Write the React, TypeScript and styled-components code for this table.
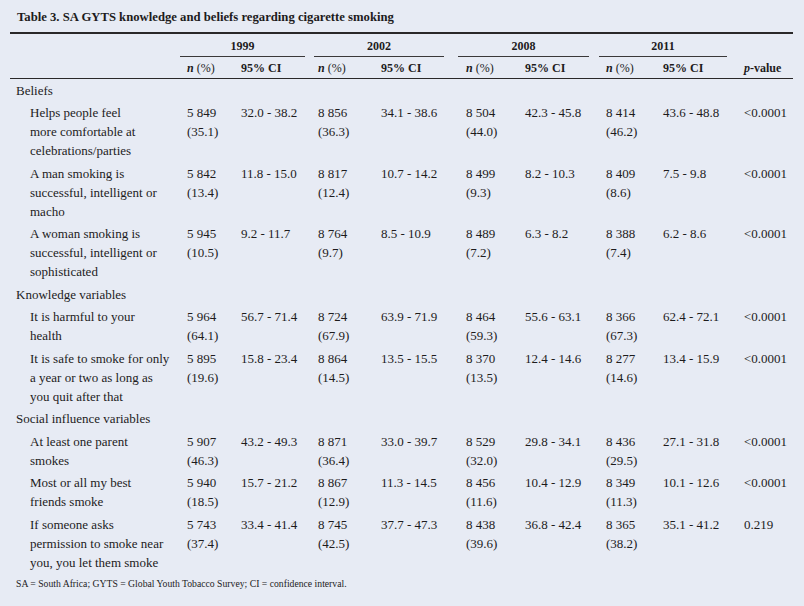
import React from 'react'
import styled, { createGlobalStyle } from 'styled-components'

type Pair = [string, string]
type Entry = {
  label: string[]
  values: [Pair, string][]
  p: string
}
type Group = { title: string; entries: Entry[] }

const years = [
  { year: '1999', l: 0, r: 6 },
  { year: '2002', l: 3, r: 15 },
  { year: '2008', l: -1, r: 10 },
  { year: '2011', l: 0, r: 10 },
]

const groups: Group[] = [
  {
    title: 'Beliefs',
    entries: [
      {
        label: ['Helps people feel', 'more comfortable at', 'celebrations/parties'],
        values: [
          [['5 849', '(35.1)'], '32.0 - 38.2'],
          [['8 856', '(36.3)'], '34.1 - 38.6'],
          [['8 504', '(44.0)'], '42.3 - 45.8'],
          [['8 414', '(46.2)'], '43.6 - 48.8'],
        ],
        p: '<0.0001',
      },
      {
        label: ['A man smoking is', 'successful, intelligent or', 'macho'],
        values: [
          [['5 842', '(13.4)'], '11.8 - 15.0'],
          [['8 817', '(12.4)'], '10.7 - 14.2'],
          [['8 499', '(9.3)'], '8.2 - 10.3'],
          [['8 409', '(8.6)'], '7.5 - 9.8'],
        ],
        p: '<0.0001',
      },
      {
        label: ['A woman smoking is', 'successful, intelligent or', 'sophisticated'],
        values: [
          [['5 945', '(10.5)'], '9.2 - 11.7'],
          [['8 764', '(9.7)'], '8.5 - 10.9'],
          [['8 489', '(7.2)'], '6.3 - 8.2'],
          [['8 388', '(7.4)'], '6.2 - 8.6'],
        ],
        p: '<0.0001',
      },
    ],
  },
  {
    title: 'Knowledge variables',
    entries: [
      {
        label: ['It is harmful to your', 'health'],
        values: [
          [['5 964', '(64.1)'], '56.7 - 71.4'],
          [['8 724', '(67.9)'], '63.9 - 71.9'],
          [['8 464', '(59.3)'], '55.6 - 63.1'],
          [['8 366', '(67.3)'], '62.4 - 72.1'],
        ],
        p: '<0.0001',
      },
      {
        label: ['It is safe to smoke for only', 'a year or two as long as', 'you quit after that'],
        values: [
          [['5 895', '(19.6)'], '15.8 - 23.4'],
          [['8 864', '(14.5)'], '13.5 - 15.5'],
          [['8 370', '(13.5)'], '12.4 - 14.6'],
          [['8 277', '(14.6)'], '13.4 - 15.9'],
        ],
        p: '<0.0001',
      },
    ],
  },
  {
    title: 'Social influence variables',
    entries: [
      {
        label: ['At least one parent', 'smokes'],
        values: [
          [['5 907', '(46.3)'], '43.2 - 49.3'],
          [['8 871', '(36.4)'], '33.0 - 39.7'],
          [['8 529', '(32.0)'], '29.8 - 34.1'],
          [['8 436', '(29.5)'], '27.1 - 31.8'],
        ],
        p: '<0.0001',
      },
      {
        label: ['Most or all my best', 'friends smoke'],
        values: [
          [['5 940', '(18.5)'], '15.7 - 21.2'],
          [['8 867', '(12.9)'], '11.3 - 14.5'],
          [['8 456', '(11.6)'], '10.4 - 12.9'],
          [['8 349', '(11.3)'], '10.1 - 12.6'],
        ],
        p: '<0.0001',
      },
      {
        label: ['If someone asks', 'permission to smoke near', 'you, you let them smoke'],
        values: [
          [['5 743', '(37.4)'], '33.4 - 41.4'],
          [['8 745', '(42.5)'], '37.7 - 47.3'],
          [['8 438', '(39.6)'], '36.8 - 42.4'],
          [['8 365', '(38.2)'], '35.1 - 41.2'],
        ],
        p: '0.219',
      },
    ],
  },
]

// column widths, starting at x=10
const colWidths = [170, 54, 77, 63, 85, 59, 81, 57, 81, 56]

function Lines({ lines }: { lines: string[] }) {
  return (
    <>
      {lines.map((line, i) => (
        <React.Fragment key={i}>
          {i > 0 && <br />}
          {line}
        </React.Fragment>
      ))}
    </>
  )
}

export default function App() {
  return (
    <>
      <GlobalStyle />
      <Page>
        <Title>Table 3. SA GYTS knowledge and beliefs regarding cigarette smoking</Title>
        <Table>
          <colgroup>
            {colWidths.map((w, i) => (
              <col key={i} style={{ width: w }} />
            ))}
          </colgroup>
          <thead>
            <tr>
              <YearHead />
              {years.map((y) => (
                <YearHead key={y.year} colSpan={2}>
                  <YearRule $l={y.l} $r={y.r}>{y.year}</YearRule>
                </YearHead>
              ))}
              <YearHead />
            </tr>
            <tr>
              <SubHead />
              {years.map((y) => (
                <React.Fragment key={y.year}>
                  <SubHead>
                    <em>n</em> <span className="plain">(%)</span>
                  </SubHead>
                  <SubHead>95% CI</SubHead>
                </React.Fragment>
              ))}
              <SubHead>
                <em>p</em>-value
              </SubHead>
            </tr>
          </thead>
          <tbody>
            {groups.map((g) => (
              <React.Fragment key={g.title}>
                <tr>
                  <SectionCell colSpan={10}>{g.title}</SectionCell>
                </tr>
                {g.entries.map((e, i) => (
                  <tr key={i}>
                    <LabelCell>
                      <Lines lines={e.label} />
                    </LabelCell>
                    {e.values.map(([n, ci], j) => (
                      <React.Fragment key={j}>
                        <Cell>
                          <Lines lines={n} />
                        </Cell>
                        <Cell>{ci}</Cell>
                      </React.Fragment>
                    ))}
                    <Cell>{e.p}</Cell>
                  </tr>
                ))}
              </React.Fragment>
            ))}
          </tbody>
        </Table>
        <Note>SA = South Africa; GYTS = Global Youth Tobacco Survey; CI = confidence interval.</Note>
      </Page>
    </>
  )
}

const GlobalStyle = createGlobalStyle`
  html, body {
    margin: 0;
    padding: 0;
    background: #e7ebf4;
  }
  body {
    width: 804px;
    height: 606px;
    overflow: hidden;
    color: #1d1b1c;
    font-family: "Liberation Serif", "Times New Roman", serif;
  }
`

const Page = styled.div`
  padding: 9px 11px 0 10px;
`

const Title = styled.h1`
  margin: 0 0 7px;
  padding-left: 7px;
  font-size: 12.7px;
  line-height: 16px;
  font-weight: bold;
`

const Table = styled.table`
  width: 783px;
  table-layout: fixed;
  border-collapse: separate;
  border-spacing: 0;
  font-size: 13px;
`

const YearHead = styled.th`
  border-top: 2px solid #2a2829;
  padding: 4.5px 0 0;
  font-size: 12px;
  font-weight: bold;
  line-height: 15px;
`

const YearRule = styled.div<{ $l: number; $r: number }>`
  margin: 0 ${(p) => p.$r}px 0 ${(p) => p.$l}px;
  padding-bottom: 2.5px;
  border-bottom: 1px solid #3a3839;
  text-align: center;
`

const SubHead = styled.th`
  border-bottom: 1.5px solid #2a2829;
  padding: 4.2px 0 1.8px 7px;
  font-size: 12px;
  font-weight: bold;
  line-height: 15px;
  text-align: left;
  white-space: nowrap;

  .plain {
    font-weight: normal;
  }
`

const Cell = styled.td`
  padding: 1.8px 0 1.7px 7px;
  line-height: 19px;
  vertical-align: top;
  white-space: nowrap;
`

const LabelCell = styled(Cell)`
  padding-left: 20px;
`

const SectionCell = styled(Cell)`
  padding-left: 6px;
`

const Note = styled.div`
  margin-top: 5px;
  padding-left: 6px;
  font-size: 9.7px;
  line-height: 12px;
`
